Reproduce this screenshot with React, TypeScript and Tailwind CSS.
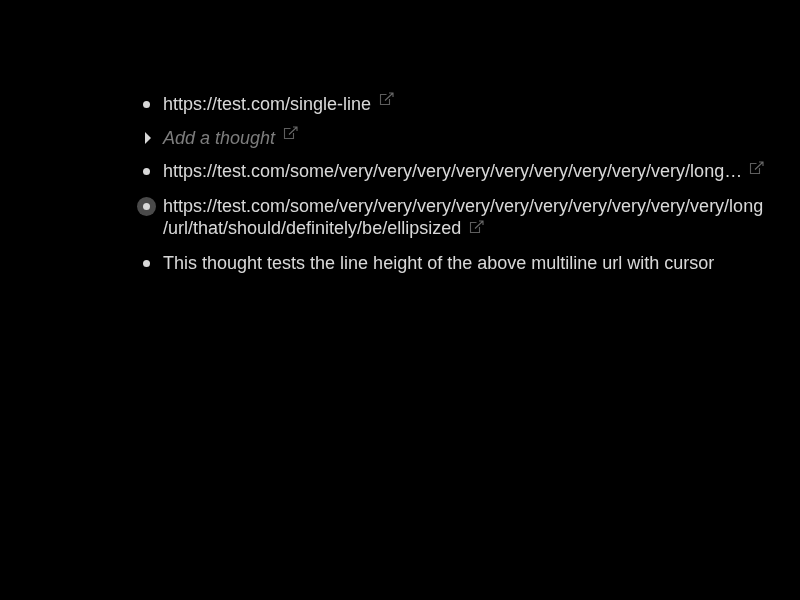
function LinkIcon({ className = "-top-[3px]" }: { className?: string }) {
  return (
    <svg width="16" height="16" viewBox="0 0 16 16" fill="none" stroke="#7c7c7c" strokeWidth="1.1" className={`inline-block align-baseline ml-2 relative ${className}`}>
      <path d="M7.5 3.5H1.5V13.5H10.5V8" stroke="#707070" />
      <path d="M6 9.5L13.5 2.5M10 2H14V6" />
    </svg>
  )
}

function Bullet({ focused = false }: { focused?: boolean }) {
  return (
    <div className="w-[19px] h-[20px] shrink-0 mr-[7px] mt-px flex items-center justify-center">
      <div className={focused ? "w-[19px] h-[19px] rounded-full bg-[#585858] flex items-center justify-center" : "flex items-center justify-center"}>
        <div className="w-[7px] h-[7px] rounded-full bg-white" />
      </div>
    </div>
  )
}

function Caret() {
  return (
    <div className="w-[19px] h-[20px] shrink-0 mr-[7px] mt-px flex items-center justify-center">
      <svg width="8" height="12" viewBox="0 0 8 12" className="ml-[2px]">
        <path d="M1 0L7 6L1 12Z" fill="#ffffff" />
      </svg>
    </div>
  )
}

export default function App() {
  return (
    <main className="min-h-[600px] w-full bg-black pt-[93px] pl-[137px]">
      <div className="opacity-[0.85] will-change-transform text-[18px] leading-[22px] text-white font-['Liberation_Sans',Arial,sans-serif]">
        <div className="flex mb-3">
          <Bullet />
          <div>
            https://test.com/single-line
            <LinkIcon />
          </div>
        </div>
        <div className="flex mb-[11px]">
          <Caret />
          <div className="italic text-[#949494]">
            Add a thought
            <LinkIcon />
          </div>
        </div>
        <div className="flex mb-[13px]">
          <Bullet />
          <div className="flex w-[601px]">
            <span className="truncate w-[582px] shrink-0">
              https://test.com/some/very/very/very/very/very/very/very/very/very/long/url/that/should/definitely/be/ellipsized
            </span>
            <span className="-ml-[4px]"><LinkIcon className="-top-px" /></span>
          </div>
        </div>
        <div className="flex mb-[13px]">
          <Bullet focused />
          <div className="w-[601px]">
            https://test.com/some/very/very/very/very/very/very/very/very/very/very/long
            <br />
            /url/that/should/definitely/be/ellipsized
            <LinkIcon className="top-px" />
          </div>
        </div>
        <div className="flex">
          <Bullet />
          <div>This thought tests the line height of the above multiline url with cursor</div>
        </div>
      </div>
    </main>
  )
}
